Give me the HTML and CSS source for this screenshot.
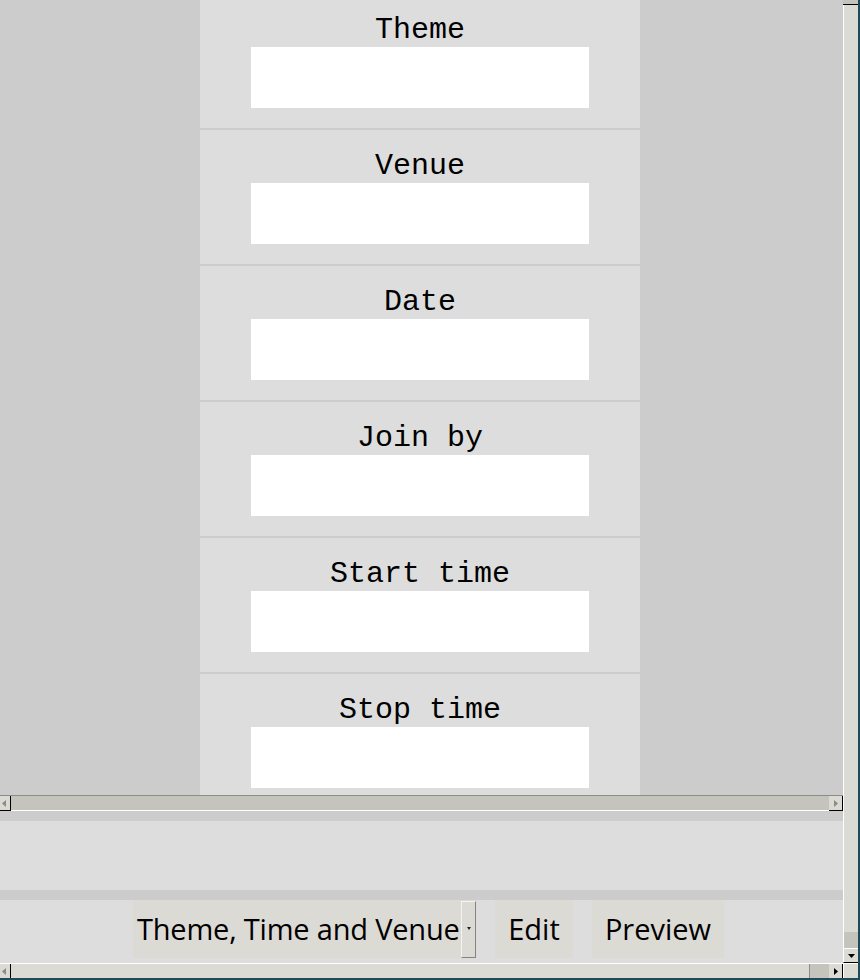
FILE: index.html
```html
<!DOCTYPE html>
<html>
<head>
<meta charset="utf-8">
<link rel="stylesheet" href="styles.css">
</head>
<body>
<div class="window">
  <div class="main">
    <div class="viewport">
      <div class="form">
        <div class="row"><div class="label">Theme</div><div class="field"></div></div>
        <div class="row"><div class="label">Venue</div><div class="field"></div></div>
        <div class="row"><div class="label">Date</div><div class="field"></div></div>
        <div class="row"><div class="label">Join by</div><div class="field"></div></div>
        <div class="row"><div class="label">Start time</div><div class="field"></div></div>
        <div class="row"><div class="label">Stop time</div><div class="field"></div></div>
      </div>
    </div>
    <div class="hbar-inner">
      <div class="harrow harrow-left"><svg width="4" height="7" viewBox="0 0 4 7"><polygon points="4,0 0,3.5 4,7" fill="#8a8a86"/></svg></div>
      <div class="htrough"></div>
      <div class="harrow harrow-right"><svg width="4" height="7" viewBox="0 0 4 7"><polygon points="0,0 4,3.5 0,7" fill="#8a8a86"/></svg></div>
    </div>
    <div class="strip"></div>
    <div class="panel"></div>
    <div class="strip"></div>
    <div class="buttonbar">
      <div class="optionmenu">
        <span class="opt-text">Theme, Time and Venue</span>
        <span class="indicator"><svg width="4" height="3" viewBox="0 0 4 3"><polygon points="0,0 4,0 2,3" fill="#222"/></svg></span>
      </div>
      <div class="btn btn-edit">Edit</div>
      <div class="btn btn-preview">Preview</div>
    </div>
  </div>
  <div class="vbar">
    <div class="vtop"></div>
    <div class="vslider"></div>
    <div class="vtrough"></div>
    <div class="vdown"><svg width="7" height="4" viewBox="0 0 7 4"><polygon points="0,0 7,0 3.5,4" fill="#000"/></svg></div>
  </div>
  <div class="hbar-outer">
    <div class="oarrow oarrow-left"><svg width="4" height="7" viewBox="0 0 4 7"><polygon points="4,0 0,3.5 4,7" fill="#8a8a86"/></svg></div>
    <div class="oslider"></div>
    <div class="otrough"></div>
    <div class="oarrow oarrow-right"><svg width="4" height="7" viewBox="0 0 4 7"><polygon points="0,0 4,3.5 0,7" fill="#000"/></svg></div>
  </div>
  <div class="corner"></div>
</div>
</body>
</html>
```
FILE: styles.css
```css
html, body {
  margin: 0;
  padding: 0;
  background: #cccccc;
  overflow: hidden;
}

.window {
  box-sizing: border-box;
  width: 860px;
  height: 980px;
  border-right: 2px solid #1f4a5a;
  border-bottom: 2px solid #1f4a5a;
  display: grid;
  grid-template-columns: 843px 15px;
  grid-template-rows: 963px 15px;
}

.main {
  display: flex;
  flex-direction: column;
  background: #cccccc;
  min-width: 0;
}

.viewport {
  height: 795px;
  overflow: hidden;
  background: #cccccc;
}

.form {
  width: 440px;
  margin: -8px 0 0 200px;
  background: #dddddd;
}

.row {
  border-top: 2px solid #cccccc;
  padding: 19px 0 20px;
  display: flex;
  flex-direction: column;
  align-items: center;
}

.label {
  font-family: "Liberation Mono", monospace;
  font-size: 30px;
  line-height: 34px;
  color: #000;
}

.field {
  width: 338px;
  height: 61px;
  background: #ffffff;
}

/* inner horizontal scrollbar */
.hbar-inner {
  display: flex;
  height: 16px;
  box-sizing: border-box;
  border-top: 1px solid #8c8c88;
}

.harrow {
  box-sizing: border-box;
  height: 15px;
  background: #dcdad5;
  border-right: 1px solid #000;
  border-bottom: 1px solid #000;
  display: flex;
  align-items: center;
  justify-content: center;
}

.harrow svg { display: block; }

.harrow-left { width: 11px; padding-right: 3px; }
.harrow-right { width: 14px; padding-left: 1px; }

.htrough {
  flex: 1;
  height: 15px;
  box-sizing: border-box;
  background: #c4c3bc;
  border-bottom: 1px solid #ffffff;
}

.strip {
  height: 10px;
  background: #cccccc;
}

.panel {
  height: 69px;
  background: #dddddd;
}

.buttonbar {
  height: 63px;
  background: #dddddd;
  display: flex;
  align-items: flex-start;
  gap: 19px;
  padding-left: 133px;
}

.optionmenu {
  width: 343px;
  height: 58px;
  background: #dcdad5;
  display: flex;
  align-items: flex-start;
}

.opt-text {
  flex: 1;
  padding-left: 4px;
  font-family: "Open Sans", "Noto Sans", sans-serif;
  font-size: 29px;
  letter-spacing: -0.2px;
  line-height: 58px;
  color: #000;
  white-space: nowrap;
}

.indicator {
  flex: none;
  box-sizing: border-box;
  width: 15px;
  height: 57px;
  margin-top: 1px;
  border-left: 1px solid #f4f3f0;
  border-top: 1px solid #f4f3f0;
  border-right: 1px solid #85837e;
  border-bottom: 1px solid #85837e;
  background: #dcdad5;
  display: flex;
  align-items: center;
  justify-content: center;
}

.indicator svg { display: block; margin-top: -2px; }

.btn {
  height: 58px;
  background: #dcdad5;
  font-family: "Open Sans", "Noto Sans", sans-serif;
  font-size: 29px;
  line-height: 58px;
  color: #000;
  text-align: center;
}

.btn-edit { width: 78px; }
.btn-preview { width: 132px; }

/* vertical scrollbar */
.vbar {
  display: flex;
  flex-direction: column;
  background: #dcdad5;
}

.vtop {
  height: 5px;
  box-sizing: border-box;
  background: #c4c3bc;
  border-bottom: 1px solid #000;
}

.vslider {
  flex: 1;
  background: #dcdad5;
  border-left: 1px solid #ffffff;
}

.vtrough {
  height: 16px;
  background: #c4c3bc;
  border-left: 1px solid #ffffff;
}

.vdown {
  box-sizing: border-box;
  height: 15px;
  background: #dcdad5;
  border-left: 1px solid #ffffff;
  border-top: 1px solid #ffffff;
  border-bottom: 1px solid #000;
  display: flex;
  align-items: center;
  justify-content: center;
}

.vdown svg { display: block; }

/* outer horizontal scrollbar */
.hbar-outer {
  display: flex;
  box-sizing: border-box;
  border-top: 1px solid #ffffff;
  background: #dcdad5;
}

.oarrow {
  box-sizing: border-box;
  background: #dcdad5;
  border-right: 1px solid #000;
  display: flex;
  align-items: center;
  justify-content: center;
}

.oarrow svg { display: block; }

.oarrow-left { width: 11px; padding-right: 3px; }
.oarrow-right { width: 14px; padding-left: 1px; }

.oslider {
  flex: 1;
  background: #dcdad5;
}

.otrough {
  width: 19px;
  background: #c4c3bc;
  border-left: 1px solid #8c8c88;
}

.corner {
  box-sizing: border-box;
  background: #dcdad5;
  border-top: 1px solid #ffffff;
  border-left: 1px solid #ffffff;
}
```
